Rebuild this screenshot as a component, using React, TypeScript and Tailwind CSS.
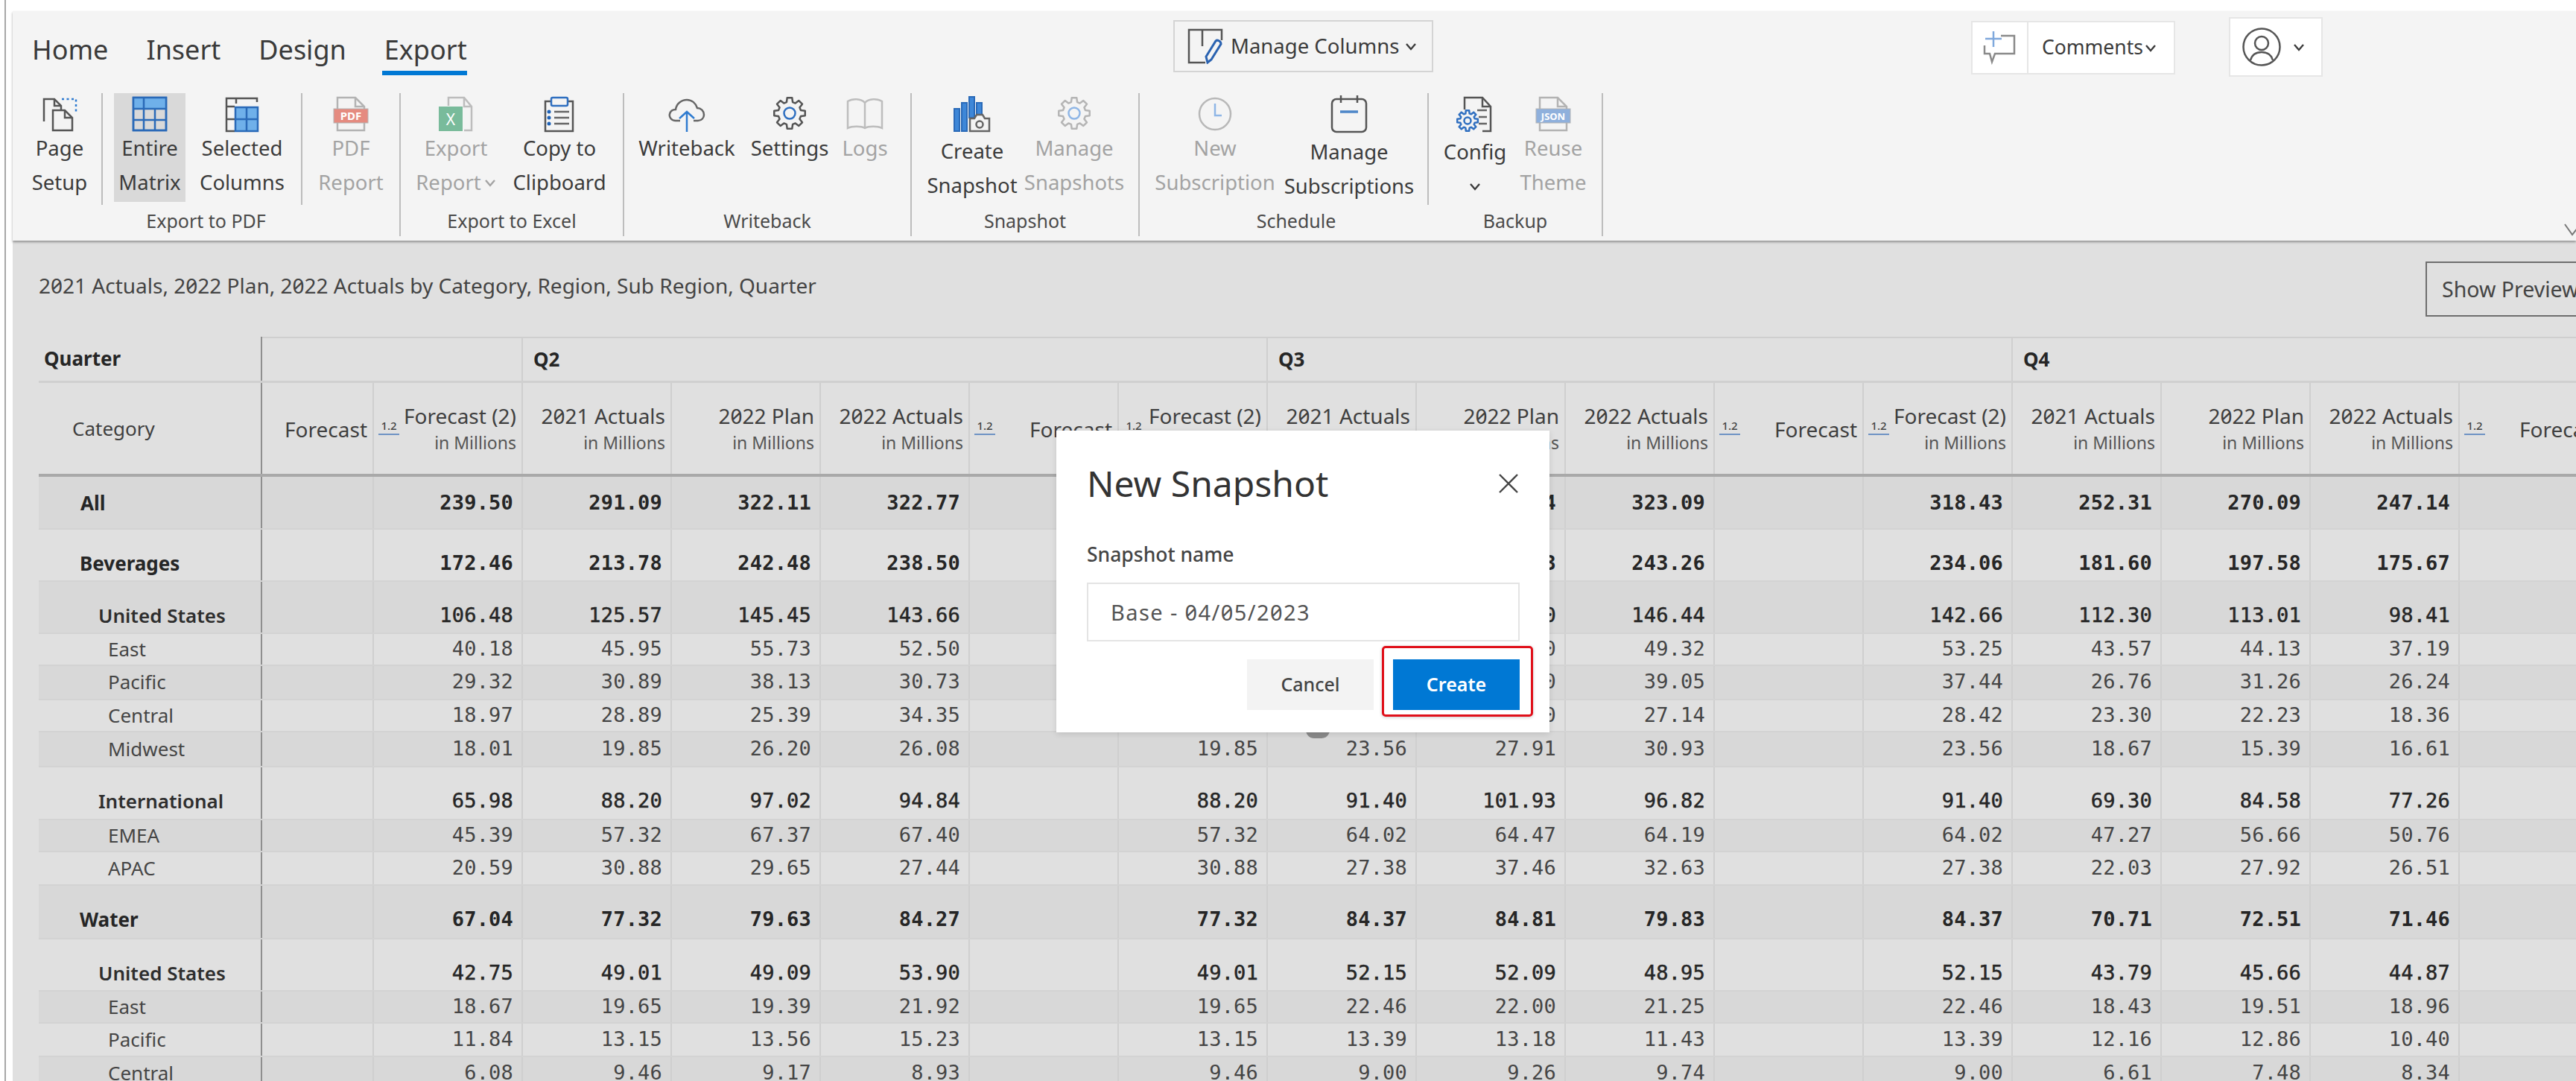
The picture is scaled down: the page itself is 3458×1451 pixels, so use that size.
import type { ReactNode } from 'react'

const sans = "font-['Noto_Sans','Open_Sans',sans-serif] slashed-zero"

function gearPath(cx: number, cy: number, outer: number, inner: number, teeth: number) {
  const pts: string[] = []
  const step = (Math.PI * 2) / teeth
  for (let i = 0; i < teeth; i++) {
    const a = i * step - Math.PI / 2
    const w = step * 0.2
    const list: [number, number][] = [
      [inner, a - step * 0.34],
      [outer, a - w],
      [outer, a + w],
      [inner, a + step * 0.34],
    ]
    for (const [r, t] of list) {
      pts.push(`${(cx + r * Math.cos(t)).toFixed(2)} ${(cy + r * Math.sin(t)).toFixed(2)}`)
    }
  }
  return `M${pts.join('L')}Z`
}

function Icon({ children }: { children: ReactNode }) {
  return (
    <svg width="50" height="50" viewBox="0 0 50 50" fill="none" strokeWidth="2.5">
      {children}
    </svg>
  )
}

const PageSetupIcon = () => (
  <Icon>
    <path d="M4 35V5h14l9 9v6" stroke="#555" />
    <path d="M18 5v9h9" stroke="#555" />
    <path d="M16 20h16l10 10v17H16V20Z" stroke="#555" fill="#f4f4f4" />
    <path d="M32 20v10h10" stroke="#555" />
    <path d="M28 5h19v20" stroke="#2f7bd0" strokeDasharray="3 3.5" />
  </Icon>
)

const EntireMatrixIcon = () => (
  <Icon>
    <rect x="3" y="3" width="44" height="44" fill="#d9d9d9" stroke="#2a6ab8" />
    <rect x="3" y="3" width="44" height="15" fill="#6fb0ea" />
    <path d="M3 3h44v44H3ZM3 18h44M3 33h44M17 3v44M32 18v29" stroke="#2a6ab8" />
  </Icon>
)

const SelectedColumnsIcon = () => (
  <Icon>
    <path d="M45 9V4H4v44h11M4 15h11M4 32h11M17 4v7" stroke="#555" />
    <rect x="16" y="16" width="30" height="32" fill="#6fb0ea" stroke="#2a6ab8" />
    <path d="M31 16v32M16 32h30" stroke="#2a6ab8" />
  </Icon>
)

const DocBadgeIcon = ({ label, color }: { label: string; color: string }) => (
  <Icon>
    <path d="M7 19V3h24l12 12v4M31 3v12h12M7 37v10h36V37" stroke="#b3b3b3" />
    <rect x="2" y="18" width="46" height="19" fill={color} stroke="#b3b3b3" strokeWidth="1" />
    <text x="25" y="33" textAnchor="middle" fill="#fff" fontSize={label.length > 3 ? 13 : 15} fontWeight="700" fontFamily="Noto Sans">
      {label}
    </text>
  </Icon>
)

const ExcelIcon = () => (
  <Icon>
    <path d="M15 14V3h21l10 12v32H36" stroke="#bdbdbd" />
    <path d="M36 3v12h10" stroke="#bdbdbd" />
    <rect x="2" y="15" width="32" height="33" fill="#79bb9b" />
    <text x="18" y="40" textAnchor="middle" fill="#fff" fontSize="21" fontFamily="Noto Sans">X</text>
  </Icon>
)

const ClipboardIcon = () => (
  <Icon>
    <path d="M14 8H6v40h37V8h-7" stroke="#555" />
    <rect x="14" y="3" width="22" height="11" rx="2" stroke="#2f6fc0" />
    <path d="M18 22h20M18 30h20M18 38h20" stroke="#666" />
    <circle cx="11" cy="22" r="2.5" fill="#1f63b8" />
    <circle cx="11" cy="30" r="2.5" fill="#1f63b8" />
    <circle cx="11" cy="38" r="2.5" fill="#1f63b8" />
  </Icon>
)

const CloudIcon = () => (
  <Icon>
    <path d="M16 34H10C4 34 1 29 2 25c1-4 4-6 8-6 1-8 8-13 15-13 7 0 12 5 14 11 5 0 9 4 9 9 0 4-3 8-8 8h-6" stroke="#666" />
    <path d="M25 49V22M15 31l10-9 10 9" stroke="#2f7bd0" />
  </Icon>
)

const GearIcon = ({ dim }: { dim?: boolean }) => (
  <Icon>
    <path d={gearPath(25, 24, 21, 15.5, 8)} stroke={dim ? '#b5b5b5' : '#555'} strokeLinejoin="round" />
    <circle cx="25" cy="24" r="7.5" stroke={dim ? '#8fb6e6' : '#2f6fc0'} />
  </Icon>
)

const BookIcon = () => (
  <Icon>
    <path d="M25 44V10C20 4 8 4 2 8v36c6-3 18-3 23 0 5-3 17-3 23 0V8c-6-4-18-4-23 2" stroke="#bdbdbd" />
  </Icon>
)

const SnapshotIcon = () => (
  <Icon>
    <g fill="#3e87d8" stroke="#2a6ab8" strokeWidth="2">
      <rect x="1" y="18" width="7" height="30" />
      <rect x="11" y="10" width="7" height="38" />
      <rect x="21" y="2" width="7" height="28" />
      <rect x="31" y="10" width="7" height="20" />
    </g>
    <path d="M22 48V31h6l3-5h8l3 5h6v17H22Z" stroke="#666" fill="#f4f4f4" />
    <circle cx="35" cy="39" r="4.5" stroke="#666" />
  </Icon>
)

const ClockIcon = () => (
  <Icon>
    <circle cx="25" cy="25" r="21" stroke="#b8b8b8" />
    <path d="M25 11v16h9" stroke="#8fb6e6" />
  </Icon>
)

const CalendarIcon = () => (
  <svg width="50" height="52" viewBox="0 0 50 52" fill="none" strokeWidth="2.5">
    <rect x="2" y="6" width="46" height="44" rx="6" stroke="#555" />
    <path d="M14 1v10M36 1v10" stroke="#555" />
    <path d="M13 23h24" stroke="#4d86c8" strokeWidth="3.5" />
  </svg>
)

const ConfigIcon = () => (
  <Icon>
    <path d="M11 19V3h24l11 12v33H35" stroke="#555" />
    <path d="M35 3v12h11" stroke="#555" />
    <path d="M28 20h13M30 29h11M30 38h11" stroke="#666" />
    <path d={gearPath(15, 34, 14, 10, 8)} stroke="#2f6fc0" strokeLinejoin="round" fill="#f4f4f4" />
    <circle cx="15" cy="34" r="4.5" stroke="#2f6fc0" />
  </Icon>
)

const Chevron = ({ className }: { className?: string }) => (
  <svg className={className} width="16" height="11" viewBox="0 0 16 11" fill="none" stroke="currentColor" strokeWidth="2.4">
    <path d="M2 2l6 7 6-7" />
  </svg>
)

type RibbonBtn = {
  lines: ReactNode[]
  icon: ReactNode
  width: string
  disabled?: boolean
  active?: boolean
  drop?: number
}

function RibbonButton({ lines, icon, width, disabled, active, drop = 0 }: RibbonBtn) {
  return (
    <div className={`flex flex-col items-center h-[146px] shrink-0 ${width} ${active ? 'bg-[#d9d9d9]' : ''}`}>
      <div className="h-[47px] mt-[4px] flex items-center justify-center">{icon}</div>
      <div
        className={`flex flex-col items-center text-[27.5px] leading-[46px] whitespace-nowrap ${disabled ? 'text-[#a3a3a3]' : 'text-[#3b3b3b]'}`}
        style={{ marginTop: drop }}
      >
        {lines.map((l, i) => (
          <span key={i} className="flex items-center h-[46px]">{l}</span>
        ))}
      </div>
    </div>
  )
}

const Divider = () => <div className="w-[2px] h-[150px] bg-[#bdbdbd] shrink-0" />

function RibbonGroup({ label, width, border = true, children, shift }: { label: string; width: string; border?: boolean; children: ReactNode; shift?: string }) {
  return (
    <div className={`flex flex-col shrink-0 h-[192px] ${width} ${border ? 'border-r-2 border-[#bdbdbd]' : ''}`}>
      <div className="flex h-[150px]">{children}</div>
      <div className={`text-center text-[25px] leading-[42px] text-[#4a4a4a] ${shift ?? ''}`}>{label}</div>
    </div>
  )
}

function Ribbon() {
  return (
    <div className="relative z-10 h-[308px] bg-[#f4f4f4] shadow-[0_2px_3px_rgba(0,0,0,0.35)]">
      {/* Tabs */}
      <div className="flex h-[110px]">
        <div className="flex pl-[26px] gap-[51px] w-[1558px] shrink-0 text-[36px] leading-[50px] text-[#3a3a3a] pt-[27px]">
          <span>Home</span>
          <span>Insert</span>
          <span>Design</span>
          <span className="relative">
            Export
            <span className="absolute left-[-3px] right-0 top-[53px] h-[6px] bg-[#0078d4]" />
          </span>
        </div>
        <div className="mt-[12px] w-[349px] h-[70px] shrink-0 flex items-center border-2 border-[#d4d4d4] pl-[17px] text-[#3b3b3b] text-[27.5px]">
          <svg width="48" height="48" viewBox="0 0 48 48" fill="none" strokeWidth="2.5">
            <path d="M24 46H2V2h44v14M20 2v22" stroke="#555" />
            <path d="M27 46l-2-8 13-21c2-2 7 0 7 4L32 42l-5 4Z" stroke="#2a62b0" strokeWidth="3" fill="#f4f4f4" />
          </svg>
          <span className="ml-[10px]">Manage Columns</span>
          <Chevron className="ml-[8px]" />
        </div>
        <div className="ml-[722px] mt-[13px] w-[274px] h-[72px] shrink-0 flex bg-white border-2 border-[#e6e6e6] text-[#3b3b3b] text-[26.5px]">
          <div className="w-[75px] flex items-center justify-center border-r-2 border-[#e6e6e6]">
            <svg width="48" height="46" viewBox="0 0 48 46" fill="none" strokeWidth="2.5">
              <path d="M25 7h18v24H17l-4 11-3-11H3V20" stroke="#8a8a8a" />
              <path d="M15 1v21M4 11h22" stroke="#7fa8dc" />
            </svg>
          </div>
          <div className="flex items-center pl-[18px]">
            Comments
            <Chevron className="ml-[2px]" />
          </div>
        </div>
        <div className="ml-[72px] mt-[8px] w-[126px] h-[80px] shrink-0 flex items-center bg-white border-2 border-[#e6e6e6] pl-[16px] text-[#3b3b3b]">
          <svg width="52" height="52" viewBox="0 0 52 52" fill="none" stroke="#555" strokeWidth="2.5">
            <circle cx="26" cy="26" r="24.5" />
            <circle cx="26" cy="21" r="9" />
            <path d="M11 44c2-8 8-11 15-11s13 3 15 11" />
          </svg>
          <Chevron className="ml-[16px]" />
        </div>
      </div>
      {/* Command groups */}
      <div className="flex">
        <RibbonGroup label="Export to PDF" width="w-[521px]">
          <div className="w-[119px] shrink-0 flex">
            <RibbonButton width="w-[121px] pl-[5px]" lines={['Page', 'Setup']} icon={<PageSetupIcon />} />
          </div>
          <Divider />
          <div className="w-[266px] shrink-0 flex pl-[15px]">
            <RibbonButton active width="w-[96px]" lines={['Entire', 'Matrix']} icon={<EntireMatrixIcon />} />
            <div className="w-[14px]" />
            <RibbonButton width="w-[124px]" lines={['Selected', 'Columns']} icon={<SelectedColumnsIcon />} />
          </div>
          <Divider />
          <RibbonButton disabled width="w-[130px]" lines={['PDF', 'Report']} icon={<DocBadgeIcon label="PDF" color="#e58b80" />} />
        </RibbonGroup>
        <RibbonGroup label="Export to Excel" width="w-[300px]">
          <RibbonButton
            disabled
            width="w-[148px]"
            lines={['Export', <span key="r" className="flex items-center">Report<Chevron className="ml-[4px]" /></span>]}
            icon={<ExcelIcon />}
          />
          <RibbonButton width="w-[130px]" lines={['Copy to', 'Clipboard']} icon={<ClipboardIcon />} />
        </RibbonGroup>
        <RibbonGroup label="Writeback" width="w-[386px]">
          <div className="w-[12px]" />
          <RibbonButton width="w-[144px]" lines={['Writeback']} icon={<CloudIcon />} />
          <RibbonButton width="w-[132px]" lines={['Settings']} icon={<GearIcon />} />
          <RibbonButton disabled width="w-[70px]" lines={['Logs']} icon={<BookIcon />} />
        </RibbonGroup>
        <RibbonGroup label="Snapshot" width="w-[306px]">
          <div className="w-[12px]" />
          <RibbonButton width="w-[138px]" drop={4} lines={['Create', 'Snapshot']} icon={<SnapshotIcon />} />
          <RibbonButton disabled width="w-[136px]" lines={['Manage', 'Snapshots']} icon={<GearIcon dim />} />
        </RibbonGroup>
        <RibbonGroup label="Schedule" width="w-[388px]" border={false} shift="pl-[32px]">
          <div className="w-[10px]" />
          <RibbonButton disabled width="w-[182px]" lines={['New', 'Subscription']} icon={<ClockIcon />} />
          <RibbonButton width="w-[178px]" drop={5} lines={['Manage', 'Subscriptions']} icon={<CalendarIcon />} />
          <div className="w-[16px]" />
          <Divider />
        </RibbonGroup>
        <RibbonGroup label="Backup" width="w-[234px]">
          <div className="w-[10px]" />
          <RibbonButton
            width="w-[104px]"
            drop={5}
            lines={['Config', <Chevron key="c" />]}
            icon={<ConfigIcon />}
          />
          <RibbonButton disabled width="w-[106px]" lines={['Reuse', 'Theme']} icon={<DocBadgeIcon label="JSON" color="#8fb0dc" />} />
        </RibbonGroup>
      </div>
      <svg className="absolute left-[3425px] top-[285px] text-[#777]" width="24" height="18" viewBox="0 0 24 18" fill="none" stroke="currentColor" strokeWidth="2">
        <path d="M1 1l10 14L22 1" />
      </svg>
    </div>
  )
}

type Row = {
  label: string
  indent: string
  weight: 'bold' | 'semi' | 'normal'
  height: string
  tall?: boolean
  first?: boolean
  q2: string[]
  q3: string[]
  q4: string[]
}

const rows: Row[] = [
  { label: 'All', indent: 'pl-[56px]', weight: 'bold', height: 'h-[71px]', tall: true, first: true, q2: ['239.50', '291.09', '322.11', '322.77'], q3: ['291.09', '318.43', '329.54', '323.09'], q4: ['318.43', '252.31', '270.09', '247.14'] },
  { label: 'Beverages', indent: 'pl-[55px]', weight: 'bold', height: 'h-[70px]', tall: true, q2: ['172.46', '213.78', '242.48', '238.50'], q3: ['213.78', '234.06', '250.73', '243.26'], q4: ['234.06', '181.60', '197.58', '175.67'] },
  { label: 'United States', indent: 'pl-[80px]', weight: 'semi', height: 'h-[70px]', tall: true, q2: ['106.48', '125.57', '145.45', '143.66'], q3: ['125.57', '142.66', '154.90', '146.44'], q4: ['142.66', '112.30', '113.01', '98.41'] },
  { label: 'East', indent: 'pl-[93px]', weight: 'normal', height: 'h-[43px]', q2: ['40.18', '45.95', '55.73', '52.50'], q3: ['45.95', '53.25', '55.10', '49.32'], q4: ['53.25', '43.57', '44.13', '37.19'] },
  { label: 'Pacific', indent: 'pl-[93px]', weight: 'normal', height: 'h-[46px]', q2: ['29.32', '30.89', '38.13', '30.73'], q3: ['30.89', '37.44', '41.20', '39.05'], q4: ['37.44', '26.76', '31.26', '26.24'] },
  { label: 'Central', indent: 'pl-[93px]', weight: 'normal', height: 'h-[43px]', q2: ['18.97', '28.89', '25.39', '34.35'], q3: ['28.89', '28.42', '30.30', '27.14'], q4: ['28.42', '23.30', '22.23', '18.36'] },
  { label: 'Midwest', indent: 'pl-[93px]', weight: 'normal', height: 'h-[47px]', q2: ['18.01', '19.85', '26.20', '26.08'], q3: ['19.85', '23.56', '27.91', '30.93'], q4: ['23.56', '18.67', '15.39', '16.61'] },
  { label: 'International', indent: 'pl-[80px]', weight: 'semi', height: 'h-[71px]', tall: true, q2: ['65.98', '88.20', '97.02', '94.84'], q3: ['88.20', '91.40', '101.93', '96.82'], q4: ['91.40', '69.30', '84.58', '77.26'] },
  { label: 'EMEA', indent: 'pl-[93px]', weight: 'normal', height: 'h-[43px]', q2: ['45.39', '57.32', '67.37', '67.40'], q3: ['57.32', '64.02', '64.47', '64.19'], q4: ['64.02', '47.27', '56.66', '50.76'] },
  { label: 'APAC', indent: 'pl-[93px]', weight: 'normal', height: 'h-[45px]', q2: ['20.59', '30.88', '29.65', '27.44'], q3: ['30.88', '27.38', '37.46', '32.63'], q4: ['27.38', '22.03', '27.92', '26.51'] },
  { label: 'Water', indent: 'pl-[55px]', weight: 'bold', height: 'h-[72px]', tall: true, q2: ['67.04', '77.32', '79.63', '84.27'], q3: ['77.32', '84.37', '84.81', '79.83'], q4: ['84.37', '70.71', '72.51', '71.46'] },
  { label: 'United States', indent: 'pl-[80px]', weight: 'semi', height: 'h-[70px]', tall: true, q2: ['42.75', '49.01', '49.09', '53.90'], q3: ['49.01', '52.15', '52.09', '48.95'], q4: ['52.15', '43.79', '45.66', '44.87'] },
  { label: 'East', indent: 'pl-[93px]', weight: 'normal', height: 'h-[43px]', q2: ['18.67', '19.65', '19.39', '21.92'], q3: ['19.65', '22.46', '22.00', '21.25'], q4: ['22.46', '18.43', '19.51', '18.96'] },
  { label: 'Pacific', indent: 'pl-[93px]', weight: 'normal', height: 'h-[45px]', q2: ['11.84', '13.15', '13.56', '15.23'], q3: ['13.15', '13.39', '13.18', '11.43'], q4: ['13.39', '12.16', '12.86', '10.40'] },
  { label: 'Central', indent: 'pl-[93px]', weight: 'normal', height: 'h-[45px]', q2: ['6.08', '9.46', '9.17', '8.93'], q3: ['9.46', '9.00', '9.26', '9.74'], q4: ['9.00', '6.61', '7.48', '8.34'] },
]

const weightText = { bold: 'font-bold text-[#262626]', semi: 'font-semibold text-[#2e2e2e]', normal: 'font-normal text-[#454545]' }
const numText = {
  bold: 'font-bold text-[#262626]',
  semi: 'font-normal text-[#262626] [-webkit-text-stroke:0.5px_#262626]',
  normal: 'font-normal text-[#454545]',
}

const Ratio = () => (
  <span className="absolute left-[6px] top-[46px] w-[28px] border-b-2 border-[#6f93c4] text-center text-[15px] leading-[22px] font-medium text-[#444]">
    1.2
  </span>
)

function HeadCell({ title, sub, ratio, width = 'w-[200px]' }: { title: string; sub?: boolean; ratio?: boolean; width?: string }) {
  return (
    <div className={`relative shrink-0 h-full flex flex-col justify-center items-end pr-[7px] pt-[2px] border-r-2 border-[#cfcfcf] ${width}`}>
      {ratio && <Ratio />}
      <span className="text-[28px] leading-[36px] text-[#3f3f3f] whitespace-nowrap">{title}</span>
      {sub && <span className="text-[23px] leading-[36px] text-[#555] whitespace-nowrap">in Millions</span>}
    </div>
  )
}

function QuarterHead() {
  return (
    <>
      <HeadCell title="Forecast (2)" sub ratio />
      <HeadCell title="2021 Actuals" sub />
      <HeadCell title="2022 Plan" sub />
      <HeadCell title="2022 Actuals" sub />
      <HeadCell title="Forecast" ratio />
    </>
  )
}

function DataRow({ row, shaded }: { row: Row; shaded: boolean }) {
  const align = row.first ? 'items-center' : row.tall ? 'items-start pt-[29px]' : 'items-center pb-[2px]'
  const cell = `shrink-0 w-[200px] h-full flex justify-end pr-[11px] border-r-2 border-[#cfcfcf] ${align}`
  const values = [...row.q2, '', ...row.q3, '', ...row.q4, '']
  return (
    <div className={`flex ${row.height} ${shaded ? 'bg-[#d8d8d8]' : 'bg-[#e0e0e0]'} border-b-2 border-[#d3d3d3]`}>
      <div className={`shrink-0 w-[300px] h-full flex border-r-2 border-[#8f8f8f] text-[26px] leading-[32px] ${align} ${row.indent} ${weightText[row.weight]}`}>
        <span>{row.label}</span>
      </div>
      <div className="shrink-0 w-[150px] h-full border-r-2 border-[#cfcfcf]" />
      {values.map((v, i) => (
        <div key={i} className={cell}>
          <span className={`font-['DejaVu_Sans_Mono',monospace] text-[27px] tracking-[0.2px] leading-[32px] ${numText[row.weight]}`}>{v}</span>
        </div>
      ))}
    </div>
  )
}

function Matrix() {
  return (
    <div className="pl-[35px]">
      <div className="flex h-[62px] border-b-[3px] border-[#d0d0d0]">
        <div className="shrink-0 w-[300px] h-full flex items-center pl-[7px] border-r-2 border-[#8f8f8f] text-[26px] font-bold text-[#262626]">Quarter</div>
        <div className="shrink-0 w-[350px] h-full border-t-2 border-r-2 border-[#cfcfcf]" />
        {['Q2', 'Q3', 'Q4'].map((q) => (
          <div key={q} className="shrink-0 w-[1000px] h-full flex items-center pl-[14px] border-t-2 border-r-2 border-[#cfcfcf] text-[26px] font-bold text-[#262626]">
            {q}
          </div>
        ))}
      </div>
      <div className="flex h-[126px] border-b-4 border-[#a9a9a9]">
        <div className="shrink-0 w-[300px] h-full flex items-center pl-[45px] border-r-2 border-[#8f8f8f] text-[26px] text-[#3f3f3f]">Category</div>
        <HeadCell title="Forecast" width="w-[150px]" />
        <QuarterHead />
        <QuarterHead />
        <QuarterHead />
      </div>
      {rows.map((r, i) => (
        <DataRow key={i} row={r} shaded={i % 2 === 0} />
      ))}
    </div>
  )
}

function SnapshotDialog() {
  return (
    <>
      <div className="absolute left-[1753px] top-[980px] w-[32px] h-[11px] rounded-b-full bg-[#8a8a8a]" />
      <div className="absolute left-[1418px] top-[578px] w-[662px] h-[405px] bg-white shadow-[0_2px_8px_rgba(0,0,0,0.12)] flex flex-col px-[41px]">
        <div className="flex items-center justify-between h-[148px] pb-[6px]">
          <span className="text-[48px] leading-[60px] text-[#333]">New Snapshot</span>
          <svg className="mr-[-1px]" width="30" height="30" viewBox="0 0 30 30" stroke="#444" strokeWidth="2.4" fill="none">
            <path d="M3 3l24 24M27 3L3 27" />
          </svg>
        </div>
        <div className="text-[26.5px] leading-[36px] font-medium text-[#444]">Snapshot name</div>
        <div className="mt-[20px] h-[79px] w-[581px] border-2 border-[#e4e4e4] flex items-center pl-[30px] text-[29px] tracking-[1.4px] text-[#555]">
          Base - 04/05/2023
        </div>
        <div className="relative mt-[24px] flex justify-end gap-[26px] text-[25px] w-[581px]">
          <div className="w-[170px] h-[68px] bg-[#f3f3f3] flex items-center justify-center font-medium text-[#444]">Cancel</div>
          <div className="w-[170px] h-[68px] bg-[#0078d4] flex items-center justify-center font-semibold text-white">Create</div>
          <div className="absolute left-[396px] top-[-18px] w-[203px] h-[95px] rounded-[5px] border-[3px] border-[#e0101a] shadow-[0_1px_4px_rgba(0,0,0,0.2)]" />
        </div>
      </div>
    </>
  )
}

export default function App() {
  return (
    <div className={`relative w-[3458px] h-[1451px] overflow-hidden bg-white flex ${sans}`}>
      <div className="w-[6px] shrink-0" />
      <div className="w-[2px] shrink-0 bg-[#a8a8a8]" />
      <div className="w-[9px] shrink-0" />
      <div className="w-[3441px] shrink-0 pt-[15px]">
        <Ribbon />
        <div className="h-[1128px] bg-[#e0e0e0] overflow-hidden">
          <div className="flex items-start pl-[35px] pt-[28px] h-[129px]">
            <div className="w-[3204px] shrink-0 h-[64px] flex items-center text-[28px] text-[#444]">
              2021 Actuals, 2022 Plan, 2022 Actuals by Category, Region, Sub Region, Quarter
            </div>
            <div className="shrink-0 w-[260px] h-[74px] border-2 border-[#6e6e6e] flex items-center pl-[20px] text-[28.5px] text-[#444] whitespace-nowrap">
              Show Preview
            </div>
          </div>
          <Matrix />
        </div>
      </div>
      <SnapshotDialog />
    </div>
  )
}
